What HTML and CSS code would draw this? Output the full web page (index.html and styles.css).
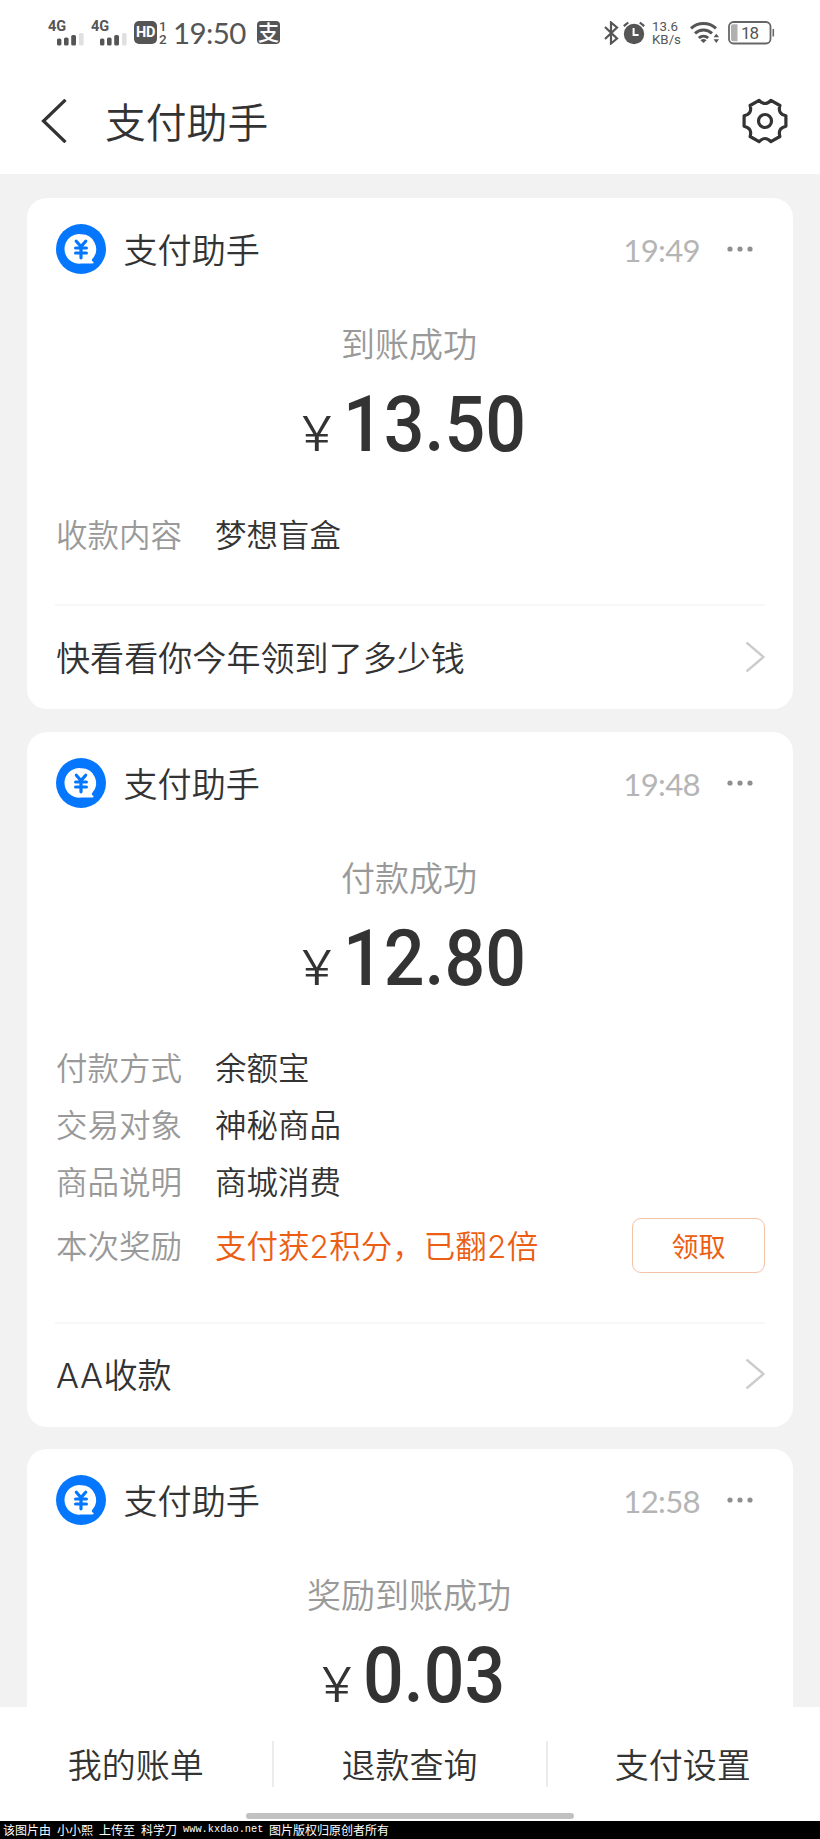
FILE: index.html
```html
<!DOCTYPE html>
<html lang="zh-CN">
<head>
<meta charset="utf-8">
<title>支付助手</title>
<link rel="stylesheet" href="styles.css">
</head>
<body>
<svg class="defs" width="0" height="0" aria-hidden="true">
  <symbol id="avatar" viewBox="0 0 50 50">
    <circle cx="25" cy="25" r="25" fill="#0577fe"/>
    <path d="M25 10.2a14.8 14.8 0 1 0 0 29.4h11.2c1.6 0 1.9-1.5.6-2.1-1.1-.5-1.3-1.6-.6-2.5A14.8 14.8 0 0 0 25 10.2z" fill="#fff"/>
    <path d="M20.3 17.3l4.7 5.2 4.7-5.2M19.6 24h10.8M19.6 29h10.8M25 23v10.8" fill="none" stroke="#0577fe" stroke-width="3.2" stroke-linecap="round"/>
  </symbol>
  <symbol id="dots" viewBox="0 0 26 6">
    <g fill="#8f8f8f"><circle cx="3" cy="3" r="2.6"/><circle cx="13" cy="3" r="2.6"/><circle cx="23" cy="3" r="2.6"/></g>
  </symbol>
  <symbol id="chevron" viewBox="0 0 20 30">
    <path d="M1.5 .5L18.5 15l-17 14.5" fill="none" stroke="#ccc" stroke-width="2.4"/>
  </symbol>
  <symbol id="bars" viewBox="0 0 28 13">
    <rect x="0" y="5.5" width="4.4" height="7" rx="1.6" fill="#555"/>
    <rect x="7" y="4.5" width="4.6" height="8" rx="1.6" fill="#555"/>
    <rect x="14.2" y="2" width="4.8" height="10.5" rx="1.6" fill="#555"/>
    <rect x="22" y="0" width="4.6" height="12.5" rx="1.6" fill="#e0e0e0"/>
  </symbol>
</svg>

<header class="top">
  <div class="status">
    <div class="signal"><span>4G</span><svg width="28" height="13"><use href="#bars"/></svg></div>
    <div class="signal second"><span>4G</span><svg width="28" height="13"><use href="#bars"/></svg></div>
    <span class="hd">HD</span>
    <div class="sim"><span>1</span><span>2</span></div>
    <span class="clock">19:50</span>
    <span class="pay-badge">支</span>
    <div class="status-right">
      <svg width="15" height="24" viewBox="0 0 15 24"><path d="M1 6l12 11.5-6 5v-21l6 5L1 18" fill="none" stroke="#555" stroke-width="2.2"/></svg>
      <svg class="alarm" width="22" height="24" viewBox="0 0 22 24">
        <circle cx="11" cy="13" r="10.2" fill="#555"/>
        <path d="M.8 5.2l4.4-3.7M21.2 5.2l-4.4-3.7" stroke="#555" stroke-width="2.2"/>
        <path d="M10.6 7v7h5" fill="none" stroke="#fff" stroke-width="2"/>
      </svg>
      <div class="speed"><span>13.6</span><span>KB/s</span></div>
      <svg class="wifi" width="30" height="24" viewBox="0 0 30 24">
        <g fill="none" stroke="#555" stroke-width="3">
          <path d="M1 7.3a18.5 18.5 0 0 1 25 0"/>
          <path d="M5 12.3a12.4 12.4 0 0 1 17 0"/>
          <path d="M8.8 17a7 7 0 0 1 9.4 0"/>
        </g>
        <path d="M10.5 19.3a4.5 4.5 0 0 1 6 0l-3 2.8z" fill="#555"/>
        <path d="M23.6 16.3l2.7-3.6 2.7 3.6zM23.6 18.3h5.4l-2.7 3.6z" fill="#555"/>
      </svg>
      <svg class="battery" width="47" height="24" viewBox="0 0 47 24">
        <rect x="1" y="1" width="41.5" height="21.5" rx="4.5" fill="#fff" stroke="#666" stroke-width="1.8"/>
        <path d="M5 3.3h4.5v17H5a2 2 0 0 1-2-2v-13a2 2 0 0 1 2-2z" fill="#b0b0b0"/>
        <path d="M45.3 8v7.5" stroke="#666" stroke-width="1.6"/>
        <text x="13" y="18" class="level" textLength="18">18</text>
      </svg>
    </div>
  </div>
  <div class="navbar">
    <svg class="back" width="26" height="44" viewBox="0 0 26 44"><path d="M24.5 .8L2.5 22l22 21.2" fill="none" stroke="#333" stroke-width="3.2"/></svg>
    <h1 class="title">支付助手</h1>
    <svg class="gear" width="48" height="48" viewBox="-24 -24 48 48">
      <g fill="none" stroke="#333" stroke-width="3.2" stroke-linejoin="round">
        <path d="M20.9-5.2V5.2Q12.4 7.2 14.9 15.5L5.9 20.7Q0 14.3-5.9 20.7L-14.9 15.5Q-12.4 7.2-20.9 5.2V-5.2Q-12.4-7.2-14.9-15.5L-5.9-20.7Q0-14.3 5.9-20.7L14.9-15.5Q12.4-7.2 20.9-5.2Z"/>
        <circle r="6.5"/>
      </g>
    </svg>
  </div>
</header>

<main class="feed">
  <section class="card">
    <div class="card-head">
      <svg class="avatar"><use href="#avatar"/></svg>
      <span class="name">支付助手</span>
      <time class="time">19:49</time>
      <svg class="dots"><use href="#dots"/></svg>
    </div>
    <div class="state">到账成功</div>
    <div class="amount"><span class="yen">¥</span><span class="num">13.50</span></div>
    <dl class="rows">
      <div class="row"><dt>收款内容</dt><dd>梦想盲盒</dd></div>
    </dl>
    <div class="card-foot"><span class="link">快看看你今年领到了多少钱</span><svg class="chevron"><use href="#chevron"/></svg></div>
  </section>

  <section class="card">
    <div class="card-head">
      <svg class="avatar"><use href="#avatar"/></svg>
      <span class="name">支付助手</span>
      <time class="time">19:48</time>
      <svg class="dots"><use href="#dots"/></svg>
    </div>
    <div class="state">付款成功</div>
    <div class="amount"><span class="yen">¥</span><span class="num">12.80</span></div>
    <dl class="rows">
      <div class="row"><dt>付款方式</dt><dd>余额宝</dd></div>
      <div class="row"><dt>交易对象</dt><dd>神秘商品</dd></div>
      <div class="row"><dt>商品说明</dt><dd>商城消费</dd></div>
      <div class="row reward"><dt>本次奖励</dt><dd>支付获<span class="latin">2</span>积分，已翻<span class="latin">2</span>倍</dd><button class="claim">领取</button></div>
    </dl>
    <div class="card-foot"><span class="link"><span class="latin">AA</span>收款</span><svg class="chevron"><use href="#chevron"/></svg></div>
  </section>

  <section class="card">
    <div class="card-head">
      <svg class="avatar"><use href="#avatar"/></svg>
      <span class="name">支付助手</span>
      <time class="time">12:58</time>
      <svg class="dots"><use href="#dots"/></svg>
    </div>
    <div class="state">奖励到账成功</div>
    <div class="amount"><span class="yen">¥</span><span class="num short">0.03</span></div>
  </section>
</main>

<nav class="tabs">
  <div class="tab-row">
    <a class="tab">我的账单</a>
    <a class="tab">退款查询</a>
    <a class="tab">支付设置</a>
  </div>
  <div class="handle"></div>
</nav>
<footer class="credit"><span>该图片由</span><span>小小熙</span><span>上传至</span><span>科学刀</span><span class="site">www.kxdao.net</span><span>图片版权归原创者所有</span></footer>
</body>
</html>
```
FILE: styles.css
```css
* { box-sizing: border-box; }
body {
  margin: 0;
  width: 820px;
  height: 1839px;
  overflow: hidden;
  display: flex;
  flex-direction: column;
  background: #f2f2f2;
  color: #333;
  font-family: "Noto Sans CJK SC", sans-serif;
  font-weight: 350;
}
svg { display: block; flex: none; }
.defs { position: absolute; }

.top { height: 174px; flex: none; background: #fff; }
.status {
  height: 65px;
  padding: 0 45px 0 48px;
  display: flex;
  align-items: center;
  color: #555;
}
.signal {
  width: 37px;
  height: 26px;
  display: flex;
  flex-direction: column;
  align-items: flex-end;
  font: 700 14.5px/13px Roboto, sans-serif;
}
.signal span { align-self: flex-start; }
.signal.second { margin-left: 6px; }
.hd {
  width: 23px;
  height: 23px;
  margin-left: 6px;
  border-radius: 5px;
  background: #555;
  color: #fff;
  font: 700 14.5px/23px Roboto, sans-serif;
  letter-spacing: -.3px;
  text-align: center;
}
.sim {
  width: 9px;
  margin-left: 2px;
  display: flex;
  flex-direction: column;
  font: 500 13.5px/12.5px Roboto, sans-serif;
}
.clock {
  margin-left: 5px;
  width: 77px;
  font: 400 29.5px/40px Lato, sans-serif;
  letter-spacing: -.6px;
}
.pay-badge {
  width: 23px;
  height: 23px;
  margin-left: 7px;
  border-radius: 4px;
  background: #555;
  color: #fff;
  font-size: 21px;
  font-weight: 500;
  line-height: 21px;
  text-align: center;
}
.status-right { display: flex; align-items: center; margin-left: auto; }
.alarm { margin-left: 4px; }
.speed {
  display: flex;
  flex-direction: column;
  width: 30px;
  margin-left: 7px;
  padding-top: 1px;
  font: 400 13.3px/13px Roboto, sans-serif;
}
.wifi { margin-left: 8px; }
.battery { margin-left: 8px; }
.level { font: 400 17px Roboto, sans-serif; fill: #555; }

.navbar { height: 109px; padding: 0 31px 0 41px; display: flex; align-items: center; }
.back { margin-top: 2px; }
.title { margin: 2px auto 0 38px; font-size: 40.8px; font-weight: 350; line-height: 60px; }
.gear { margin-top: 2px; }

.feed { height: 1533px; flex: none; padding: 24px 27px 0; overflow: hidden; }
.card { margin-bottom: 22.5px; padding: 0 28px; border-radius: 20px; background: #fff; overflow: hidden; }
.card:last-child { height: 400px; margin: 0; }
.card-head { height: 102px; display: flex; align-items: center; }
.avatar { width: 50px; height: 50px; margin-left: .5px; }
.name { margin: 0 auto 2px 18px; font-size: 34.1px; line-height: 50px; }
.time { margin: 2px 27px 0 0; color: #b5b5b5; font: 400 31.2px/40px Lato, sans-serif; letter-spacing: -.7px; }
.dots { width: 26px; height: 6px; margin-right: 12px; }
.state { margin-top: 23px; padding-right: 2px; color: #999; font-size: 34px; line-height: 40px; text-align: center; }
.amount { height: 80px; margin-top: 22px; display: flex; justify-content: center; align-items: baseline; }
.yen {
  margin-right: 12px;
  font: 300 48px/80px Inter, sans-serif;
  transform: scaleX(1.16);
  transform-origin: 100% 50%;
}
.num {
  width: 171px;
  font: 500 78px/80px Roboto, sans-serif;
  transform: scaleX(.92);
  transform-origin: 0 50%;
}
.num.short { width: 131px; }
.rows { margin: 41px 0 0; padding-bottom: 41px; font-size: 31.5px; }
.row { height: 57px; display: flex; align-items: center; }
.row dt { width: 160px; padding: 0 0 4px 1px; color: #999; }
.row dd { margin: 0; padding-bottom: 4px; }
.latin { font-family: Inter, sans-serif; font-weight: 350; line-height: 1; letter-spacing: .5px; }
.reward { height: 70px; }
.reward dd { color: #eb5e13; }
.claim {
  width: 133px;
  height: 55px;
  margin-left: auto;
  padding: 0;
  border: 1px solid #f3c3a8;
  border-radius: 9px;
  background: #fff;
  color: #eb5e13;
  font: 400 27px/50px "Noto Sans CJK SC", sans-serif;
}
.card-foot {
  height: 105px;
  padding-bottom: 2px;
  display: flex;
  align-items: center;
  justify-content: space-between;
  border-top: 2px solid #f7f7f7;
  font-size: 34.1px;
}
.link { padding: 0 0 2px 1px; }
.chevron { width: 20px; height: 30px; }

.tabs { height: 114px; flex: none; background: #fff; }
.tab-row { height: 106px; display: grid; grid-template-columns: repeat(3, 1fr); align-items: center; padding-top: 8px; }
.tab { height: 46px; padding-right: 2px; font-size: 34px; line-height: 45px; text-align: center; }
.tab + .tab { border-left: 2px solid #ececec; margin-left: -1px; }
.handle { width: 328px; height: 6px; margin: 0 auto; border-radius: 3px; background: #c1c1c1; }
.credit {
  height: 18px;
  flex: none;
  padding-left: 3px;
  display: flex;
  gap: 6px;
  background: #000;
  color: #fff;
  font-size: 12px;
  font-weight: 400;
  line-height: 17px;
}
.site { width: 80px; font: 10.3px/17px "Liberation Mono", monospace; }
```
